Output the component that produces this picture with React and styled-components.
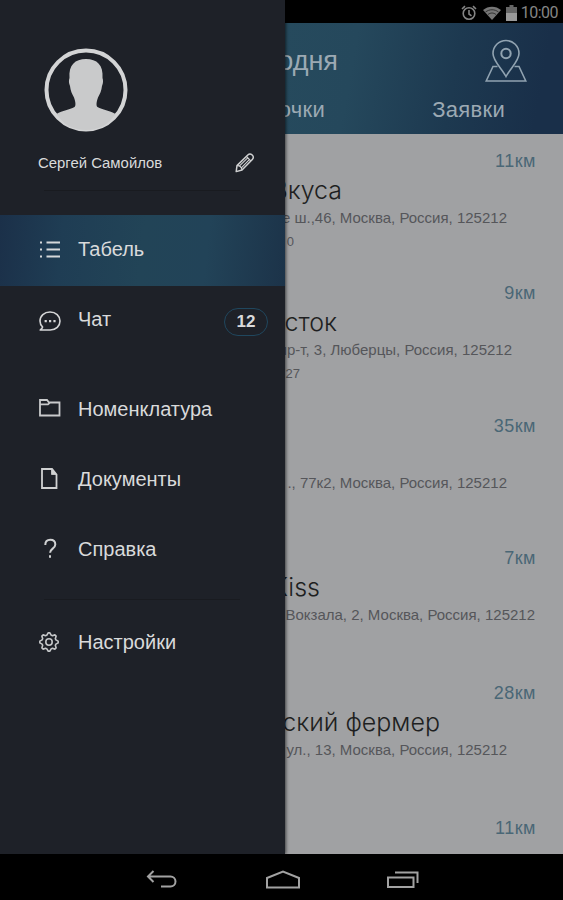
import React from 'react';
import styled, { createGlobalStyle } from 'styled-components';

const GlobalStyle = createGlobalStyle`
  * {
    box-sizing: border-box;
  }

  body {
    margin: 0;
    background: #000;
    font-family: "Liberation Sans", Arial, sans-serif;
  }

  svg {
    display: block;
    flex-shrink: 0;
  }
`;

const Device = styled.div`
  display: flex;
  flex-direction: column;
  width: 563px;
  height: 900px;
  overflow: hidden;
`;

const Screen = styled.div`
  display: flex;
  height: 854px;
`;

// Side menu
const Drawer = styled.aside`
  position: relative;
  z-index: 1;
  width: 285px;
  height: 854px;
  flex-shrink: 0;
  background: #1e2128;
  box-shadow: 1px 0 3px rgba(0, 0, 0, 0.6);
  color: #d9dadb;
`;

const Profile = styled.div`
  height: 190px;
  padding: 48px 30px 0 38px;
`;

const Avatar = styled.svg`
  margin-left: 6px;
`;

const ProfileRow = styled.div`
  display: flex;
  align-items: center;
  justify-content: space-between;
  height: 24px;
  margin-top: 19px;
`;

const UserName = styled.span`
  font-size: 14.9px;
`;

const Divider = styled.hr`
  width: 196px;
  height: 1px;
  margin: 0 0 0 44px;
  border: 0;
  background: #191b20;
`;

const Menu = styled.nav`
  display: flex;
  flex-direction: column;
  padding-top: ${(p) => p.$top}px;
`;

const MenuItem = styled.a`
  display: flex;
  align-items: center;
  height: ${(p) => p.$height || 70}px;
  padding: 0 17px 2px 38px;
  background: ${(p) =>
    p.$active
      ? 'linear-gradient(96deg, #1b3049 0%, #1f3d54 22%, #224457 50%, #224358 72%, #1c3349 100%)'
      : 'none'};
`;

const MenuIcon = styled.span`
  display: flex;
  width: 40px;
`;

const MenuLabel = styled.span`
  flex: 1;
  margin-bottom: ${(p) => p.$lift || 0}px;
  font-size: 20px;
  line-height: 24px;
`;

const Badge = styled.span`
  width: 44px;
  height: 28px;
  margin-top: 4px;
  border: 1.5px solid #20475e;
  border-radius: 14px;
  font-size: 17px;
  font-weight: bold;
  line-height: 26px;
  text-align: center;
`;

// Dimmed page behind the menu
const Page = styled.main`
  flex: 1;
  min-width: 0;
  display: flex;
  flex-direction: column;
  overflow: hidden;
  background: #a0a1a3;
`;

const StatusBar = styled.div`
  display: flex;
  align-items: center;
  justify-content: flex-end;
  flex-shrink: 0;
  height: 23px;
  padding: 2px 5px 0 0;
  background: #000;
  color: #858585;
`;

const Clock = styled.span`
  margin-left: 4px;
  font-family: Roboto, sans-serif;
  font-size: 16px;
  letter-spacing: -0.5px;
`;

const Header = styled.header`
  flex-shrink: 0;
  height: 111px;
  padding: 15px 36px 0 0;
  background: linear-gradient(100deg, #264a5d 0%, #25485c 25%, #1d3950 60%, #192f49 90%);
  color: #9ca9b3;
`;

const HeaderRow = styled.div`
  display: flex;
  align-items: center;
  justify-content: space-between;
  height: 46px;
`;

const Tabs = styled(HeaderRow)`
  height: 52px;
  padding-right: 22px;
`;

// Keeps the end of the text visible, the start slides under the menu
const Clip = styled.div`
  display: flex;
  justify-content: flex-end;
  width: ${(p) => p.$width}px;
  overflow: hidden;
  white-space: nowrap;
`;

const PageTitle = styled(Clip)`
  font-size: 27px;
`;

const Tab = styled(Clip)`
  font-size: 22px;
  letter-spacing: 0.3px;
`;

const Card = styled.article`
  height: ${(p) => p.$height}px;
  flex-shrink: 0;
  padding-top: 17px;
`;

const Distance = styled.div`
  width: 251px;
  font-size: 18px;
  line-height: 21px;
  letter-spacing: 0.5px;
  text-align: right;
  color: #4a6776;
`;

const Shop = styled(Clip)`
  height: 32px;
  margin-top: 1px;
  font-family: Inter, sans-serif;
  font-weight: 300;
  font-size: 25px;
  line-height: 34px;
  color: #1e1f21;
`;

const Address = styled(Clip)`
  height: 23px;
  font-size: 15px;
  line-height: 25px;
  color: #55565a;
`;

const Note = styled(Address)`
  height: 26px;
  font-size: 13px;
  line-height: 27px;
`;

const NavBar = styled.footer`
  display: flex;
  align-items: center;
  justify-content: space-between;
  height: 46px;
  padding: 5px 144px 0 146px;
  background: #000;
`;

const cards = [
  { km: '11км', height: 132, shop: 'Вкуса', shopEnd: 57, address: 'е ш.,46, Москва, Россия, 125212', end: 222, note: '0', noteEnd: 9 },
  { km: '9км', height: 133, shop: 'осток', shopEnd: 52, address: 'пр-т, 3, Люберцы, Россия, 125212', end: 227, note: '27', noteEnd: 15 },
  { km: '35км', height: 132, shop: '', shopEnd: 0, address: '., 77к2, Москва, Россия, 125212', end: 222 },
  { km: '7км', height: 135, shop: 'Kiss', shopEnd: 35, address: 'Вокзала, 2, Москва, Россия, 125212', end: 250 },
  { km: '28км', height: 135, shop: 'ский фермер', shopEnd: 155, address: 'ул., 13, Москва, Россия, 125212', end: 222 },
  { km: '11км', height: 133, shop: '', shopEnd: 0, address: '', end: 0 },
];

const ListIcon = () => (
  <svg width="23" height="20" viewBox="0 0 23 20" stroke="#d5d8da" strokeWidth="2">
    <path d="M8.500 2.500h13.500M8.500 9.500h13.500M8.500 16.500h13.500M2 2.500h2M2 9.500h2M2 16.500h2" />
  </svg>
);

const ChatIcon = () => (
  <svg width="23" height="22" viewBox="0 0 23 22" fill="none" stroke="#d5d6d7" strokeWidth="1.6">
    <path d="M2.200 21h10C18 21 22 17 22 12S17.800 3 12 3 2 7 2 12c0 2.500 1 4.500 2.600 6-.3 1-1.200 2-2.400 3z" strokeLinejoin="round" />
    <path d="M6.600 12.200h2.200M11 12.200h2.200M15.400 12.200h2.200" strokeWidth="2.200" />
  </svg>
);

const FolderIcon = () => (
  <svg width="23" height="20" viewBox="0 0 23 20" fill="none" stroke="#c9cacc" strokeWidth="1.8">
    <path d="M2 16.500V1h7l2 2.500h10.500v13zM2 5.300h8l2-1.800" />
  </svg>
);

const FileIcon = () => (
  <svg width="23" height="22" viewBox="0 0 23 22" fill="none" stroke="#d0d1d2" strokeWidth="1.8">
    <path d="M4 1h10L18.500 6.500V20H4z" />
    <path d="M13.500 1v5.500h5z" fill="#d0d1d2" strokeWidth="0.800" />
  </svg>
);

const HelpIcon = () => (
  <svg width="23" height="22" viewBox="0 0 23 22" fill="none" stroke="#d0d1d2" strokeWidth="2">
    <path d="M7.300 7c0-3.500 2-5.200 5-5.200s5 1.700 5 4.600c0 4.300-5.200 4.100-5.200 8.300M12 17.200v2.500" />
  </svg>
);

const gear = () => {
  const points = [];
  for (let i = 0; i < 32; i += 1) {
    const angle = ((i - 0.5) / 32) * Math.PI * 2;
    const radius = i % 4 < 2 ? 9.2 : 7.2;
    points.push(`${11 + radius * Math.cos(angle)},${11 + radius * Math.sin(angle)}`);
  }
  return points.join(' ');
};

const GearIcon = () => (
  <svg width="22" height="22" viewBox="0 0 22 22" fill="none" stroke="#c4c6c8" strokeWidth="1.600" strokeLinejoin="round">
    <polygon points={gear()} />
    <circle cx="11" cy="11" r="3.200" />
  </svg>
);

const PencilIcon = () => (
  <svg width="20" height="20" viewBox="0 0 20 20" fill="none" stroke="#d0d1d2" strokeWidth="1.500" strokeLinejoin="round">
    <path d="M1.200 18.600l.8-6L12.800 2c1.500-1.500 3-1.300 4.400 0s1.500 2.900.1 4.400L7 17z" />
    <path d="M2 12.600c2.600-.2 4.500 1.500 5 4.400M11.500 3.500l4.300 4.300M4.800 12.700l7.900-7.800M6.600 14.600l7.700-7.900" strokeWidth="1.100" />
  </svg>
);

const MapIcon = () => (
  <svg width="42" height="44" viewBox="0 0 42 44" fill="none" stroke="#91a3b1" strokeWidth="1.600">
    <path d="M21 37.500C16.500 29 8 22 8 14.500a13 13 0 0126 0C34 22 25.500 29 21 37.500z" />
    <circle cx="21" cy="14.500" r="4.700" strokeWidth="2" />
    <path d="M12.500 27.500H8L1.200 42h39.600L34 27.500h-4.500" />
  </svg>
);

const menuTop = [
  { label: 'Табель', icon: <ListIcon />, active: true, height: 71, lift: 2 },
  { label: 'Чат', icon: <ChatIcon />, badge: 12, lift: 2 },
];

const menuMain = [
  { label: 'Номенклатура', icon: <FolderIcon />, height: 71 },
  { label: 'Документы', icon: <FileIcon /> },
  { label: 'Справка', icon: <HelpIcon /> },
];

const menuBottom = [{ label: 'Настройки', icon: <GearIcon /> }];

const MenuGroup = ({ items, top }) => (
  <Menu $top={top}>
    {items.map((item) => (
      <MenuItem key={item.label} $active={item.active} $height={item.height}>
        <MenuIcon>{item.icon}</MenuIcon>
        <MenuLabel $lift={item.lift}>{item.label}</MenuLabel>
        {item.badge && <Badge>{item.badge}</Badge>}
      </MenuItem>
    ))}
  </Menu>
);

const App = () => {
  return (
    <Device>
      <GlobalStyle />
      <Screen>
        <Drawer>
          <Profile>
            <Avatar width="84" height="84" viewBox="0 0 84 84">
              <circle cx="42" cy="42" r="39.500" fill="none" stroke="#d3d4d5" strokeWidth="4" />
              <path
                d="M12.500 66c6-3.500 13-4.500 18-7 1.500-1 1.200-5-.5-9.500-2-3.500-3.500-7-4-11.500-1.300-3-1.300-6-.5-8C24.500 17 31 11 42 11s17.500 6 16.500 19c.8 2 .8 5-.5 8-.5 4.500-2 8-4 11.500-1.700 4.500-2 8.500-.5 9.500 5 2.500 12 3.500 18 7C64 77 55 82 42 82S20 77 12.500 66z"
                fill="#c9cacb"
              />
            </Avatar>
            <ProfileRow>
              <UserName>Сергей Самойлов</UserName>
              <PencilIcon />
            </ProfileRow>
          </Profile>
          <Divider />
          <MenuGroup items={menuTop} top={24} />
          <MenuGroup items={menuMain} top={18} />
          <Menu $top={14}>
            <Divider />
          </Menu>
          <MenuGroup items={menuBottom} top={8} />
        </Drawer>

        <Page>
          <StatusBar>
            <svg width="16" height="16" viewBox="0 0 16 16" fill="none" stroke="#858585" strokeWidth="1.600">
              <circle cx="8" cy="8.500" r="5.800" />
              <path d="M8 5v4l2.500 1.800M1 4l3-2.800M15 4l-3-2.800" />
            </svg>
            <svg width="18" height="14" viewBox="0 0 18 14" style={{ marginLeft: 6 }}>
              <path d="M0 4C5-.500 13-.500 18 4L9 14z" fill="#777" />
              <path d="M2.500 6c4-3 9-3 13 0M5 8.500c2.500-2 5.500-2 8 0" fill="none" stroke="#222" strokeWidth="0.800" />
            </svg>
            <svg width="11" height="16" viewBox="0 0 11 16" style={{ marginLeft: 5 }}>
              <path d="M3.500 0h4v2H11v14H0V2h3.500z" fill="#666" />
              <path d="M0 8h11v8H0z" fill="#999" />
            </svg>
            <Clock>10:00</Clock>
          </StatusBar>
          <Header>
            <HeaderRow>
              <PageTitle $width={53}>Сегодня</PageTitle>
              <MapIcon />
            </HeaderRow>
            <Tabs>
              <Tab $width={40}>Точки</Tab>
              <Tab $width={75}>Заявки</Tab>
            </Tabs>
          </Header>
          {cards.map((card, i) => (
            <Card key={i} $height={card.height}>
              <Distance>{card.km}</Distance>
              <Shop $width={card.shopEnd}>{card.shop}</Shop>
              <Address $width={card.end}>{card.address}</Address>
              {card.note && <Note $width={card.noteEnd}>{card.note}</Note>}
            </Card>
          ))}
        </Page>
      </Screen>

      <NavBar>
        <svg width="32" height="20" viewBox="0 0 32 20" fill="none" stroke="#a2a2a2" strokeWidth="2">
          <path d="M7.500 1L2 6.500 7.500 12M2 6.500h22.500a4.800 4.800 0 010 10H15" />
        </svg>
        <svg width="36" height="20" viewBox="0 0 36 20" fill="none" stroke="#a2a2a2" strokeWidth="2">
          <path d="M2 17.500V8L18 1.500 34 8v9.500z" />
        </svg>
        <svg width="32" height="20" viewBox="0 0 32 20" fill="none" stroke="#a2a2a2" strokeWidth="2">
          <path d="M1 7.500h25.500v9.500H1zM8 2.500h22.500V13" />
        </svg>
      </NavBar>
    </Device>
  );
};

export default App;
